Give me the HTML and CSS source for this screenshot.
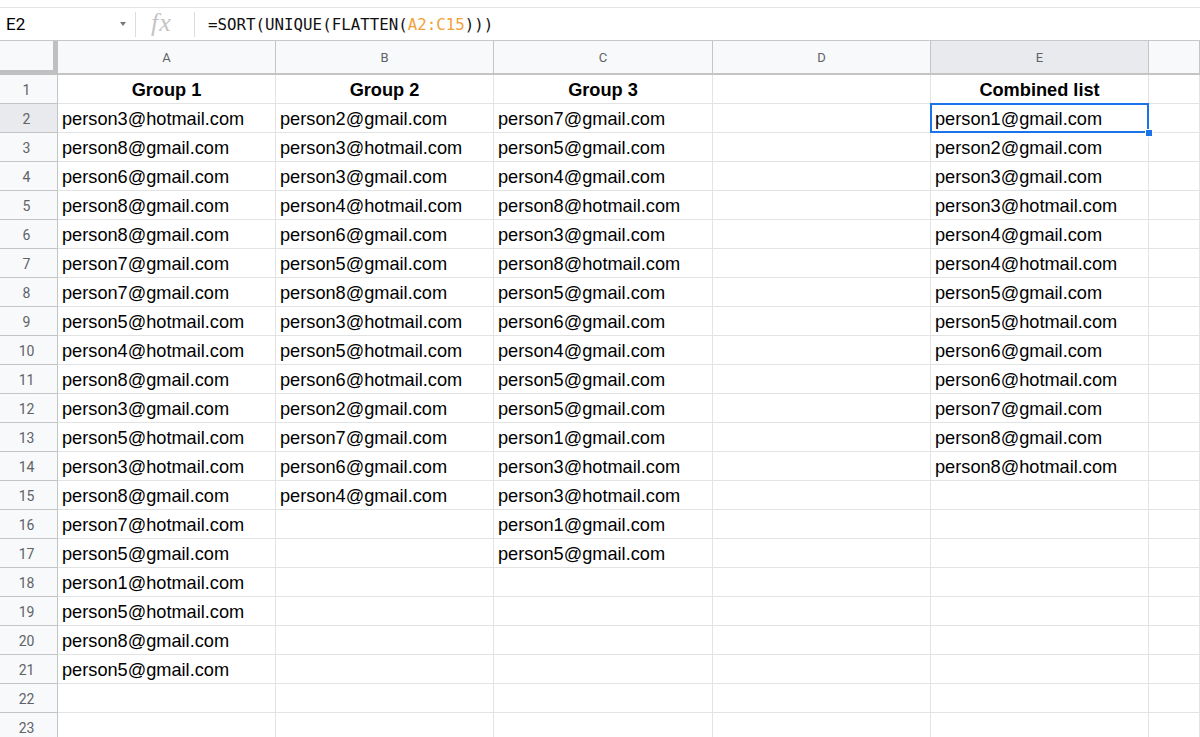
FILE: index.html
```html
<!DOCTYPE html>
<html lang="en">
<head>
<meta charset="utf-8">
<title>Sheet</title>
<link rel="stylesheet" href="styles.css">
</head>
<body>
<div class="topgap"></div>
<div class="formula-bar">
  <div class="namebox"><span class="ref">E2</span><span class="caret"></span></div>
  <div class="sep"></div>
  <div class="fx">fx</div>
  <div class="sep"></div>
  <div class="formula">=SORT(UNIQUE(FLATTEN(<span class="range">A2:C15</span>)))</div>
</div>
<div class="sheet">
  <div class="row head">
    <div class="corner"></div><div class="ch">A</div><div class="ch">B</div><div class="ch">C</div><div class="ch">D</div><div class="ch sel">E</div><div class="ch"></div>
  </div>
  <div class="row"><div class="rh">1</div><div class="c b">Group 1</div><div class="c b">Group 2</div><div class="c b">Group 3</div><div class="c"></div><div class="c b">Combined list</div><div class="c"></div></div>
  <div class="row"><div class="rh sel">2</div><div class="c">person3@hotmail.com</div><div class="c">person2@gmail.com</div><div class="c">person7@gmail.com</div><div class="c"></div><div class="c active">person1@gmail.com<span class="handle"></span></div><div class="c"></div></div>
  <div class="row"><div class="rh">3</div><div class="c">person8@gmail.com</div><div class="c">person3@hotmail.com</div><div class="c">person5@gmail.com</div><div class="c"></div><div class="c">person2@gmail.com</div><div class="c"></div></div>
  <div class="row"><div class="rh">4</div><div class="c">person6@gmail.com</div><div class="c">person3@gmail.com</div><div class="c">person4@gmail.com</div><div class="c"></div><div class="c">person3@gmail.com</div><div class="c"></div></div>
  <div class="row"><div class="rh">5</div><div class="c">person8@gmail.com</div><div class="c">person4@hotmail.com</div><div class="c">person8@hotmail.com</div><div class="c"></div><div class="c">person3@hotmail.com</div><div class="c"></div></div>
  <div class="row"><div class="rh">6</div><div class="c">person8@gmail.com</div><div class="c">person6@gmail.com</div><div class="c">person3@gmail.com</div><div class="c"></div><div class="c">person4@gmail.com</div><div class="c"></div></div>
  <div class="row"><div class="rh">7</div><div class="c">person7@gmail.com</div><div class="c">person5@gmail.com</div><div class="c">person8@hotmail.com</div><div class="c"></div><div class="c">person4@hotmail.com</div><div class="c"></div></div>
  <div class="row"><div class="rh">8</div><div class="c">person7@gmail.com</div><div class="c">person8@gmail.com</div><div class="c">person5@gmail.com</div><div class="c"></div><div class="c">person5@gmail.com</div><div class="c"></div></div>
  <div class="row"><div class="rh">9</div><div class="c">person5@hotmail.com</div><div class="c">person3@hotmail.com</div><div class="c">person6@gmail.com</div><div class="c"></div><div class="c">person5@hotmail.com</div><div class="c"></div></div>
  <div class="row"><div class="rh">10</div><div class="c">person4@hotmail.com</div><div class="c">person5@hotmail.com</div><div class="c">person4@gmail.com</div><div class="c"></div><div class="c">person6@gmail.com</div><div class="c"></div></div>
  <div class="row"><div class="rh">11</div><div class="c">person8@gmail.com</div><div class="c">person6@hotmail.com</div><div class="c">person5@gmail.com</div><div class="c"></div><div class="c">person6@hotmail.com</div><div class="c"></div></div>
  <div class="row"><div class="rh">12</div><div class="c">person3@gmail.com</div><div class="c">person2@gmail.com</div><div class="c">person5@gmail.com</div><div class="c"></div><div class="c">person7@gmail.com</div><div class="c"></div></div>
  <div class="row"><div class="rh">13</div><div class="c">person5@hotmail.com</div><div class="c">person7@gmail.com</div><div class="c">person1@gmail.com</div><div class="c"></div><div class="c">person8@gmail.com</div><div class="c"></div></div>
  <div class="row"><div class="rh">14</div><div class="c">person3@hotmail.com</div><div class="c">person6@gmail.com</div><div class="c">person3@hotmail.com</div><div class="c"></div><div class="c">person8@hotmail.com</div><div class="c"></div></div>
  <div class="row"><div class="rh">15</div><div class="c">person8@gmail.com</div><div class="c">person4@gmail.com</div><div class="c">person3@hotmail.com</div><div class="c"></div><div class="c"></div><div class="c"></div></div>
  <div class="row"><div class="rh">16</div><div class="c">person7@hotmail.com</div><div class="c"></div><div class="c">person1@gmail.com</div><div class="c"></div><div class="c"></div><div class="c"></div></div>
  <div class="row"><div class="rh">17</div><div class="c">person5@gmail.com</div><div class="c"></div><div class="c">person5@gmail.com</div><div class="c"></div><div class="c"></div><div class="c"></div></div>
  <div class="row"><div class="rh">18</div><div class="c">person1@hotmail.com</div><div class="c"></div><div class="c"></div><div class="c"></div><div class="c"></div><div class="c"></div></div>
  <div class="row"><div class="rh">19</div><div class="c">person5@hotmail.com</div><div class="c"></div><div class="c"></div><div class="c"></div><div class="c"></div><div class="c"></div></div>
  <div class="row"><div class="rh">20</div><div class="c">person8@gmail.com</div><div class="c"></div><div class="c"></div><div class="c"></div><div class="c"></div><div class="c"></div></div>
  <div class="row"><div class="rh">21</div><div class="c">person5@gmail.com</div><div class="c"></div><div class="c"></div><div class="c"></div><div class="c"></div><div class="c"></div></div>
  <div class="row"><div class="rh">22</div><div class="c"></div><div class="c"></div><div class="c"></div><div class="c"></div><div class="c"></div><div class="c"></div></div>
  <div class="row"><div class="rh">23</div><div class="c"></div><div class="c"></div><div class="c"></div><div class="c"></div><div class="c"></div><div class="c"></div></div>
</div>
</body>
</html>
```
FILE: styles.css
```css
* { box-sizing: border-box; }
html, body { margin: 0; padding: 0; background: #fff; overflow: hidden; }
body { font-family: "Liberation Sans", Arial, sans-serif; color: #000; }

.topgap { height: 7px; }

.formula-bar {
  height: 34px;
  border-top: 1px solid #e3e3e3;
  border-bottom: 1px solid #c8c8c8;
  display: flex;
  align-items: center;
}
.namebox {
  width: 135px;
  display: flex;
  align-items: center;
  justify-content: space-between;
  padding: 0 9px 0 6px;
}
.ref { font-family: Roboto, "Liberation Sans", sans-serif; font-size: 17px; color: #000; }
.caret {
  width: 0; height: 0;
  border-left: 3.5px solid transparent;
  border-right: 3.5px solid transparent;
  border-top: 4px solid #777;
}
.sep { width: 1px; height: 25px; background: #dadce0; }
.fx {
  width: 58px;
  padding-left: 15px;
  font-family: "Liberation Serif", "Times New Roman", serif;
  font-style: italic;
  font-size: 26px;
  letter-spacing: 1px;
  color: #c4c4c4;
  line-height: 1;
  margin-top: -3px;
}
.formula {
  padding-left: 13px;
  font-family: "DejaVu Sans Mono", monospace;
  font-size: 15.8px;
  color: #111;
}
.range { color: #f0a23a; }

.sheet { display: flex; flex-direction: column; }
.row {
  display: grid;
  grid-template-columns: 58px 218px 218px 219px 218px 218px 1fr;
  height: 29px;
}
.row.head { height: 34px; }

.corner {
  background: #f8f9fa;
  border-right: 5px solid #c0c0c0;
  border-bottom: 5px solid #c0c0c0;
}
.ch {
  background: #f8f9fa;
  border-right: 1px solid #c4c4c4;
  border-bottom: 2px solid #c4c4c4;
  display: flex;
  align-items: center;
  justify-content: center;
  font-family: Roboto, "Liberation Sans", sans-serif;
  font-size: 13px;
  color: #5f6368;
}
.ch.sel, .rh.sel { background: #e8eaed; }

.rh {
  background: #f8f9fa;
  border-right: 1px solid #c4c4c4;
  border-bottom: 1px solid #c4c4c4;
  display: flex;
  align-items: center;
  justify-content: center;
  font-family: Roboto, "Liberation Sans", sans-serif;
  font-size: 14px;
  color: #5f6368;
  padding: 2px 4px 0 0;
}

.c {
  border-right: 1px solid #e2e3e3;
  border-bottom: 1px solid #e2e3e3;
  display: flex;
  align-items: center;
  padding: 2px 0 0 4px;
  font-size: 18.2px;
  white-space: nowrap;
  overflow: visible;
}
.c.b { font-weight: bold; justify-content: center; padding-left: 0; }

.c.active { position: relative; }
.c.active::after {
  content: "";
  position: absolute;
  left: -1px; top: -1px; right: -1px; bottom: -1px;
  border: 2px solid #1a73e8;
  pointer-events: none;
}
.handle {
  position: absolute;
  right: -5px;
  bottom: -5px;
  width: 8px;
  height: 8px;
  background: #1a73e8;
  border: 1px solid #fff;
  z-index: 2;
}
```
